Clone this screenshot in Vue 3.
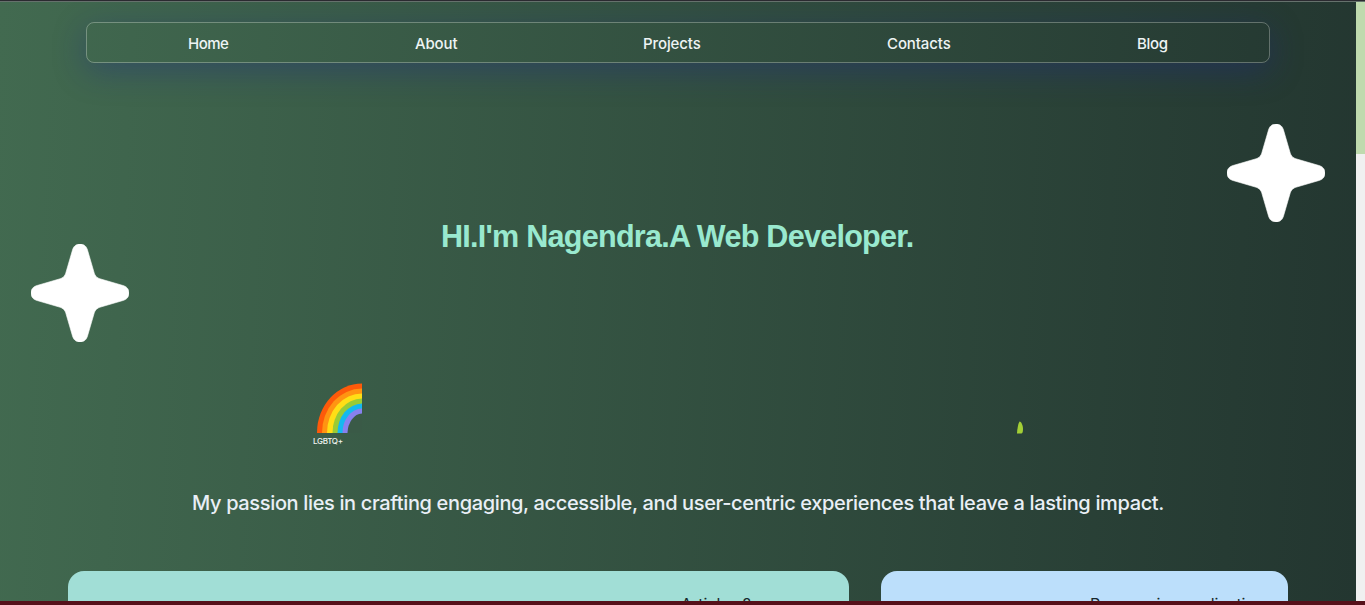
<script setup>
const links = [
  { label: 'Home', cls: 'home' },
  { label: 'About', cls: 'about' },
  { label: 'Projects', cls: 'projects' },
  { label: 'Contacts', cls: 'contacts' },
  { label: 'Blog', cls: 'blog' },
]
const star = 'M49 0C53 0 55.500 2.500 56.500 6L63.500 30Q64.500 33 68 34.500L92 41.500C95.500 42.500 98 45 98 49S95.500 55.500 92 56.500L68 63.500Q64.500 65 63.500 68L56.500 92C55.500 95.500 53 98 49 98S42.500 95.500 41.500 92L34.500 68Q33.500 65 30 63.500L6 56.500C2.500 55.500 0 53 0 49S2.500 42.500 6 41.500L30 34.500Q33.500 33 34.500 30L41.500 6C42.500 2.500 45 0 49 0Z'
</script>

<template>
  <div class="screen">
    <div class="topline"></div>
    <div class="body">
      <main class="page">
        <nav class="nav">
          <a v-for="l in links" :key="l.label" :class="l.cls">{{ l.label }}</a>
        </nav>
        <h1>HI.I'm Nagendra.A Web Developer.</h1>
        <div class="emojis">
          <figure class="pride">
            <svg width="46" height="50" viewBox="0 0 46 50">
              <path d="M0 50V49A45 49 0 0 1 45 .5V50Z" fill="#fd5a0a" />
              <path d="M5 50A40 44 0 0 1 45 5.500V50Z" fill="#ff9412" />
              <path d="M10 50A35 39 0 0 1 45 10.500V50Z" fill="#ffde16" />
              <path d="M15.500 50A30 34 0 0 1 45 15.500V50Z" fill="#9acb35" />
              <path d="M20.500 50A25 29 0 0 1 45 20.500V50Z" fill="#14b9ef" />
              <path d="M25.500 50A20 24 0 0 1 45 25.500V50Z" fill="#8781ef" />
              <path d="M30.500 50A15 20 0 0 1 45 30.500V50Z" fill="#3a5a47" />
            </svg>
            <figcaption>LGBTQ+</figcaption>
          </figure>
          <svg class="leaf" width="7" height="13" viewBox="0 0 7 13">
            <path d="M3.500 .5C5.500 .5 7 5 7 8Q7 12 5.500 12.500L1 12.500Q1.500 4 3.500 .5Z" fill="#a3cf36" />
          </svg>
        </div>
        <p class="tagline">My passion lies in crafting engaging, accessible, and user-centric experiences that leave a lasting impact.</p>
        <div class="cards">
          <section class="card mint"><span>Articles ?</span></section>
          <section class="card blue"><span>Progressive application</span></section>
        </div>
        <svg class="star left" width="98" height="98" viewBox="0 0 98 98"><path :d="star" fill="#fff" stroke="#fff" stroke-width="0.6" /></svg>
        <svg class="star right" width="98" height="98" viewBox="0 0 98 98"><path :d="star" fill="#fff" stroke="#fff" stroke-width="0.6" /></svg>
      </main>
      <aside class="scrollbar"><div class="thumb"></div></aside>
    </div>
    <div class="bottomline"></div>
  </div>
</template>

<style>
body { margin: 0; overflow: hidden; }
</style>

<style scoped>
.screen {
  width: 1365px;
  height: 605px;
  display: flex;
  flex-direction: column;
  overflow: hidden;
  font-family: Inter, "Liberation Sans", sans-serif;
}
.topline { height: 1px; flex: none; background: #2b2a30; border-bottom: 1px solid #65716c; }
.bottomline { height: 4px; flex: none; background: #56101a; }
.body { flex: 1; min-height: 0; display: flex; }
.page {
  position: relative;
  width: 1356px;
  overflow: hidden;
  background: linear-gradient(93deg, #426a50 0%, #233630 100%);
}
.scrollbar { flex: 1; background: #f0f0f0; }
.thumb { height: 152px; background: #bfdaae; }
.nav {
  box-sizing: border-box;
  width: 1184px;
  height: 41px;
  margin: 20px 0 0 86px;
  padding: 2px 8px 0;
  display: flex;
  align-items: center;
  justify-content: space-around;
  border: 1px solid #ffffff48;
  border-radius: 8px;
  box-shadow: 0 8px 32px 0 rgba(31, 38, 135, 0.37);
}
.nav a { font-size: 15px; line-height: 20px; font-weight: 500; color: #eef4f4; white-space: nowrap; }
.home { width: 41px; letter-spacing: -0.5px; }
.about { width: 42px; letter-spacing: -0.15px; }
.projects { width: 58px; letter-spacing: -0.1px; }
.contacts { width: 64px; letter-spacing: -0.1px; }
.blog { width: 31px; letter-spacing: -0.3px; }
h1 {
  margin: 153px 0 0 441px;
  width: 500px;
  height: 40px;
  font-family: "Liberation Sans", Arial, sans-serif;
  font-size: 32px;
  line-height: 40px;
  font-weight: 700;
  letter-spacing: -0.8px;
  transform: scaleX(0.956);
  transform-origin: left;
  color: #99e9cf;
  white-space: nowrap;
}
.emojis { height: 62px; margin: 127px 0 0 313px; display: flex; }
.pride { margin: 0; width: 703px; }
.pride svg { display: block; margin-left: 4px; }
figcaption { font-size: 8px; line-height: 9px; margin-top: 4px; letter-spacing: -0.3px; font-weight: 500; color: #f2f6f2; }
.leaf { margin-top: 38px; }
.tagline {
  margin: 43px 0 0 192px;
  height: 30px;
  font-size: 20px;
  line-height: 30px;
  font-weight: 500;
  letter-spacing: -0.355px;
  color: #e9eff6;
  white-space: nowrap;
}
.cards { display: flex; gap: 32px; margin: 53px 0 0 68px; }
.card { box-sizing: border-box; height: 120px; padding-top: 23px; border-radius: 16px; font-size: 16px; line-height: 20px; color: #17282b; white-space: nowrap; }
.mint { width: 781px; padding-left: 613px; background: #a1ded6; }
.blue { width: 407px; padding-left: 209px; letter-spacing: -0.1px; background: #bcdffb; }
.star { position: absolute; }
.left { left: 31px; top: 242px; }
.right { left: 1227px; top: 122px; }
</style>
